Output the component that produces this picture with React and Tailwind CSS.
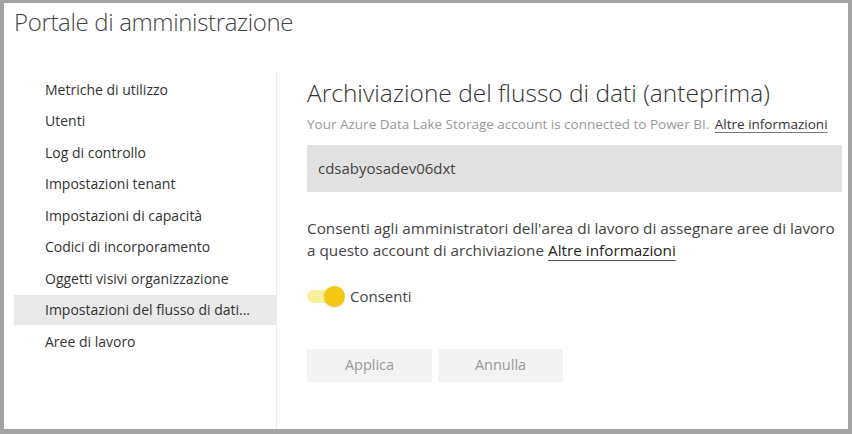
import React, { useState } from "react";

const menu = [
  "Metriche di utilizzo",
  "Utenti",
  "Log di controllo",
  "Impostazioni tenant",
  "Impostazioni di capacità",
  "Codici di incorporamento",
  "Oggetti visivi organizzazione",
  "Impostazioni del flusso di dati...",
  "Aree di lavoro",
];

export default function App() {
  const [allowed, setAllowed] = useState(true);
  const active = 7;

  return (
    <div
      className="w-[852px] h-[434px] bg-[#a3a3a3] pt-[3px] pl-[4px] pr-[4px] pb-[5px]"
      style={{ fontFamily: '"Open Sans", "Noto Sans", sans-serif' }}
    >
      <div className="w-full h-full bg-white flex flex-col">
        <div className="h-[69px] pl-[10px] pt-[2px]">
          <h1 className="text-[24px] font-light text-[#444] leading-[34px] tracking-[-0.35px]">Portale di amministrazione</h1>
        </div>

        <div className="flex flex-1">
          {/* sidebar */}
          <div className="w-[273px] border-r border-[#ececec] pl-[10px] pt-[2px] flex flex-col gap-[1.5px]">
            {menu.map((item, i) => (
              <div
                key={item}
                className={`h-[30px] flex items-center pl-[31px] text-[14px] text-[#333] ${
                  i === active ? "bg-[#e9e9e9]" : ""
                }`}
              >
                {item}
              </div>
            ))}
          </div>

          {/* content */}
          <div className="flex-1 pl-[30px] pr-[6px] pt-[5px]">
            <h2 className="text-[24.5px] font-light text-[#333] leading-[32px]">
              Archiviazione del flusso di dati (anteprima)
            </h2>
            <p className="mt-[6px] text-[13.5px] leading-[18px] text-[#999]">
              Your Azure Data Lake Storage account is connected to Power BI.{" "}
              <a className="ml-[2px] text-[#333] underline underline-offset-[3px] decoration-[#777]">Altre informazioni</a>
            </p>
            <div className="mt-[12px] h-[47px] bg-[#e1e1e1] flex items-center pl-[11px] text-[15px] text-[#444]">
              cdsabyosadev06dxt
            </div>
            <p className="mt-[25px] text-[15.3px] leading-[22px] text-[#444]">
              Consenti agli amministratori dell'area di lavoro di assegnare aree di lavoro
              <br />a questo account di archiviazione{" "}
              <a className="text-[#222] underline underline-offset-[4px] decoration-[#555]">Altre informazioni</a>
            </p>
            <div className="mt-[24px] flex items-center">
              <button
                onClick={() => setAllowed(!allowed)}
                className="relative w-[38px] h-[21px] flex items-center"
              >
                <span className={`w-[30px] h-[13px] rounded-full ${allowed ? "bg-[#f8f09c]" : "bg-[#ccc]"}`} />
                <span
                  className={`absolute top-0 w-[21px] h-[21px] rounded-full shadow-sm ${
                    allowed ? "left-[17px] bg-[#f2c811]" : "left-0 bg-[#888]"
                  }`}
                />
              </button>
              <span className="ml-[5px] text-[15px] text-[#444]">Consenti</span>
            </div>
            <div className="mt-[41px] flex gap-[6px]">
              <button className="w-[125px] h-[33px] bg-[#f3f3f3] text-[14.5px] text-[#999]">Applica</button>
              <button className="w-[125px] h-[33px] bg-[#f3f3f3] text-[14.5px] text-[#999]">Annulla</button>
            </div>
          </div>
        </div>
      </div>
    </div>
  );
}
